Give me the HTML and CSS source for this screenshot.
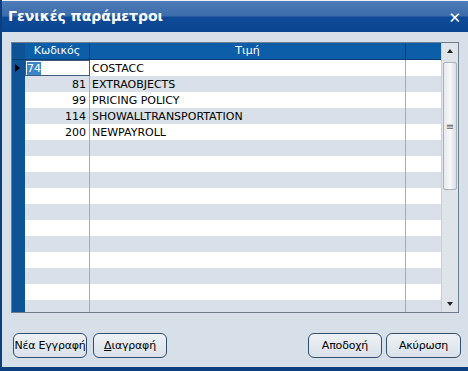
FILE: index.html
```html
<!DOCTYPE html>
<html lang="el">
<head>
    <meta charset="UTF-8">
    <title>Γενικές παράμετροι</title>
    <link rel="stylesheet" href="styles.css">
</head>
<body>
    <div class="window">
        <div class="titlebar">
            <span class="title">Γενικές παράμετροι</span>
            <span class="close">&#10005;</span>
        </div>

        <div class="content">
            <!-- πλέγμα παραμέτρων -->
            <div class="grid-frame">
                <div class="grid">
                    <div class="row head">
                        <div class="ind"></div>
                        <div class="c-code">Κωδικός</div>
                        <div class="c-val">Τιμή</div>
                        <div class="c-x"></div>
                    </div>
                    <div class="row">
                        <div class="ind"><span class="arrow"></span></div>
                        <div class="c-code edit"><span class="sel">74</span></div>
                        <div class="c-val">COSTACC</div>
                        <div class="c-x"></div>
                    </div>
                    <div class="row alt">
                        <div class="ind"></div>
                        <div class="c-code">81</div>
                        <div class="c-val">EXTRAOBJECTS</div>
                        <div class="c-x"></div>
                    </div>
                    <div class="row">
                        <div class="ind"></div>
                        <div class="c-code">99</div>
                        <div class="c-val">PRICING POLICY</div>
                        <div class="c-x"></div>
                    </div>
                    <div class="row alt">
                        <div class="ind"></div>
                        <div class="c-code">114</div>
                        <div class="c-val">SHOWALLTRANSPORTATION</div>
                        <div class="c-x"></div>
                    </div>
                    <div class="row">
                        <div class="ind"></div>
                        <div class="c-code">200</div>
                        <div class="c-val">NEWPAYROLL</div>
                        <div class="c-x"></div>
                    </div>
                    <div class="row alt"><div class="ind"></div><div class="c-code"></div><div class="c-val"></div><div class="c-x"></div></div>
                    <div class="row"><div class="ind"></div><div class="c-code"></div><div class="c-val"></div><div class="c-x"></div></div>
                    <div class="row alt"><div class="ind"></div><div class="c-code"></div><div class="c-val"></div><div class="c-x"></div></div>
                    <div class="row"><div class="ind"></div><div class="c-code"></div><div class="c-val"></div><div class="c-x"></div></div>
                    <div class="row alt"><div class="ind"></div><div class="c-code"></div><div class="c-val"></div><div class="c-x"></div></div>
                    <div class="row"><div class="ind"></div><div class="c-code"></div><div class="c-val"></div><div class="c-x"></div></div>
                    <div class="row alt"><div class="ind"></div><div class="c-code"></div><div class="c-val"></div><div class="c-x"></div></div>
                    <div class="row"><div class="ind"></div><div class="c-code"></div><div class="c-val"></div><div class="c-x"></div></div>
                    <div class="row alt"><div class="ind"></div><div class="c-code"></div><div class="c-val"></div><div class="c-x"></div></div>
                    <div class="row"><div class="ind"></div><div class="c-code"></div><div class="c-val"></div><div class="c-x"></div></div>
                    <div class="row alt"><div class="ind"></div><div class="c-code"></div><div class="c-val"></div><div class="c-x"></div></div>
                </div>
                <div class="scrollbar">
                    <div class="sb-btn"><span class="tri up"></span></div>
                    <div class="sb-track">
                        <div class="thumb"><span class="grip">&#8801;</span></div>
                    </div>
                    <div class="sb-btn"><span class="tri down"></span></div>
                </div>
            </div>

            <div class="buttons">
                <button class="btn">Νέα Εγγραφή</button>
                <button class="btn"><u>Δ</u>ιαγραφή</button>
                <span class="spacer"></span>
                <button class="btn">Αποδοχή</button>
                <button class="btn last">Ακύρωση</button>
            </div>
        </div>
    </div>
</body>
</html>
```

FILE: styles.css
```css
html, body {
    margin: 0;
    padding: 0;
}
body {
    font-family: "DejaVu Sans", Tahoma, sans-serif;
    font-size: 11px;
    color: #000;
    background: #0c3f7e;
}
.window {
    width: 466px;
    height: 366px;
    margin-left: 2px;
    background: #d7dfe8;
    border-top: 1px solid #eef3f8;
    overflow: hidden;
}
.titlebar {
    height: 31px;
    background: linear-gradient(#4d7cb8 0%, #3c6cab 48%, #0f4a98 52%, #0a4590 100%);
    display: flex;
    align-items: center;
    justify-content: space-between;
    padding: 0 7px 0 6px;
    color: #fff;
}
.title {
    font-weight: bold;
    font-size: 14px;
    padding-bottom: 2px;
}
.close {
    font-size: 15px;
    font-weight: bold;
    margin-top: 2px;
}
.content {
    padding: 10px 7px 0 9px;
}
.grid-frame {
    display: flex;
    width: 446px;
    height: 269px;
    border: 1px solid #6e7d8e;
    background: #fff;
    overflow: hidden;
}
.grid {
    flex: 1;
    background: #0d5395;
}
.row {
    display: flex;
    height: 16px;
    line-height: 17px;
    background: #fff;
}
.row.alt {
    background: #d9e0e9;
}
.row > div {
    border-right: 1px solid #a4acb5;
    box-sizing: border-box;
    overflow: hidden;
    white-space: nowrap;
}
.ind {
    width: 13px;
    flex: none;
    background: #0d5395;
    border-right: none !important;
    position: relative;
}
.c-code {
    width: 65px;
    flex: none;
    text-align: right;
    padding-right: 3px;
}
.c-val {
    width: 316px;
    flex: none;
    padding-left: 2px;
}
.c-x {
    flex: 1;
    border-right: none !important;
}
.row.head {
    background: #0c5ea9;
    color: #fff;
    height: 17px;
    line-height: 16px;
    border-bottom: 1px solid #0a3d70;
    box-sizing: border-box;
}
.row.head > div {
    text-align: center;
    border-right: 1px solid #083563;
    padding: 0;
}
.row.head .ind {
    background: #0d5395;
}
.edit {
    background: #fff;
    border: 1px solid #3c5e86 !important;
    text-align: left !important;
    padding-left: 1px;
    line-height: 15px;
}
.sel {
    background: #3b86c9;
    color: #fff;
}
.arrow {
    position: absolute;
    left: 3px;
    top: 4px;
    border-left: 5px solid #000;
    border-top: 4px solid transparent;
    border-bottom: 4px solid transparent;
}
.scrollbar {
    width: 16px;
    flex: none;
    background: #dfe4ea;
    display: flex;
    flex-direction: column;
    border-left: 1px solid #c9d0d8;
}
.sb-btn {
    height: 16px;
    display: flex;
    align-items: center;
    justify-content: center;
}
.tri {
    border-left: 3px solid transparent;
    border-right: 3px solid transparent;
}
.tri.up {
    border-bottom: 4px solid #222;
}
.tri.down {
    border-top: 4px solid #222;
}
.sb-track {
    flex: 1;
    padding: 3px 1px;
}
.thumb {
    height: 126px;
    background: linear-gradient(90deg, #e6e9ed, #f7f8fa 50%, #d8dde3);
    border: 1px solid #aab2bc;
    border-radius: 2px;
    display: flex;
    align-items: center;
    justify-content: center;
    color: #666;
    font-size: 10px;
}
.buttons {
    display: flex;
    gap: 6px;
    margin-top: 20px;
    padding-left: 2px;
}
.spacer {
    flex: 1;
}
.btn {
    font-family: "DejaVu Sans", Tahoma, sans-serif;
    font-size: 11px;
    letter-spacing: -0.2px;
    white-space: nowrap;
    height: 25px;
    padding: 0;
    width: 74px;
    border: 1px solid #30506f;
    border-radius: 6px;
    background: linear-gradient(#eef2f6, #d9e1ea);
    color: #000;
}
.btn.last {
    margin-left: -2px;
    width: 75px;
}
```
